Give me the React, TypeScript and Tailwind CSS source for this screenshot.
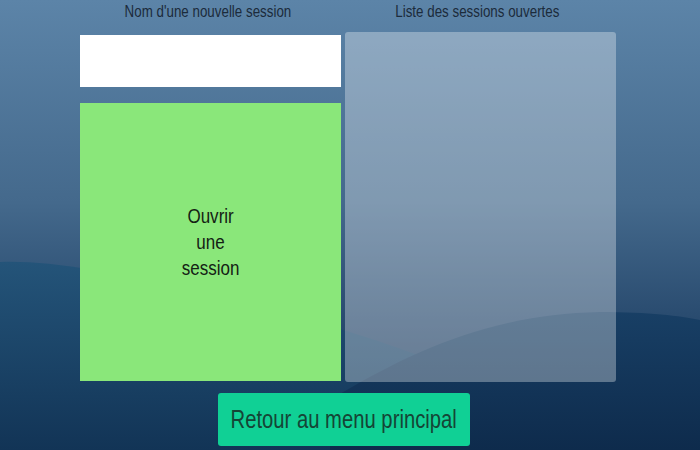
import React from "react";

function Backdrop() {
  return (
    <svg
      className="absolute inset-0 h-full w-full"
      viewBox="0 0 700 450"
      preserveAspectRatio="none"
    >
      <defs>
        <linearGradient id="sky" x1="0" y1="0" x2="0" y2="1">
          <stop offset="0" stopColor="#5c84a8" />
          <stop offset="0.45" stopColor="#44698c" />
          <stop offset="0.7" stopColor="#2a4c70" />
          <stop offset="1" stopColor="#122c4c" />
        </linearGradient>
        <linearGradient id="wave1" x1="0" y1="0" x2="0" y2="1">
          <stop offset="0" stopColor="#245479" />
          <stop offset="1" stopColor="#123456" />
        </linearGradient>
        <linearGradient id="wave2" x1="0" y1="0" x2="0" y2="1">
          <stop offset="0" stopColor="#183f65" />
          <stop offset="1" stopColor="#0e2b4c" />
        </linearGradient>
      </defs>
      <rect width="700" height="450" fill="url(#sky)" />
      <path
        d="M0 262 C 50 260 110 272 190 290 C 300 315 380 340 430 360 L 430 450 L 0 450 Z"
        fill="url(#wave1)"
      />
      <path
        d="M330 400 C 420 345 500 314 600 312 C 650 312 680 316 700 320 L 700 450 L 330 450 Z"
        fill="url(#wave2)"
      />
    </svg>
  );
}

export default function App() {
  const font = { fontFamily: '"Liberation Sans", Arial, sans-serif' };
  return (
    <div className="relative h-[450px] w-[700px] overflow-hidden" style={font}>
      <Backdrop />
      <div className="relative flex flex-col pl-[80px]">
        <div className="flex gap-[4px]">
          <div className="flex w-[261px] flex-col">
            <h2 className="h-[35px] whitespace-nowrap pr-[6px] pt-[1px] text-center text-[16.5px] leading-[20px] text-[#1c2b3b]">
              <span className="inline-block scale-x-[0.81]">Nom d'une nouvelle session</span>
            </h2>
            <input
              type="text"
              className="h-[52px] w-full bg-white px-3 text-[18px] text-gray-900 outline-none"
            />
            <button className="mt-[16px] flex h-[278px] w-full flex-col items-center justify-center bg-[#8ae77a] text-[21px] leading-[26px] text-[#142114]">
              <span className="inline-block scale-x-[0.81]">Ouvrir</span>
              <span className="inline-block scale-x-[0.81]">une</span>
              <span className="inline-block scale-x-[0.81]">session</span>
            </button>
          </div>
          <div className="flex w-[271px] flex-col">
            <h2 className="h-[32px] whitespace-nowrap pr-[6px] pt-[1px] text-center text-[16.5px] leading-[20px] text-[#1c2b3b]">
              <span className="inline-block scale-x-[0.81]">Liste des sessions ouvertes</span>
            </h2>
            <div className="h-[350px] rounded-[3px] bg-white/[0.32]" />
          </div>
        </div>
        <div className="ml-[138px] mt-[11px]">
          <button className="flex h-[53px] w-[252px] items-center justify-center whitespace-nowrap rounded-[3px] bg-[#10d095] text-[25px] text-[#154536]">
            <span className="inline-block scale-x-[0.81]">Retour au menu principal</span>
          </button>
        </div>
      </div>
    </div>
  );
}
